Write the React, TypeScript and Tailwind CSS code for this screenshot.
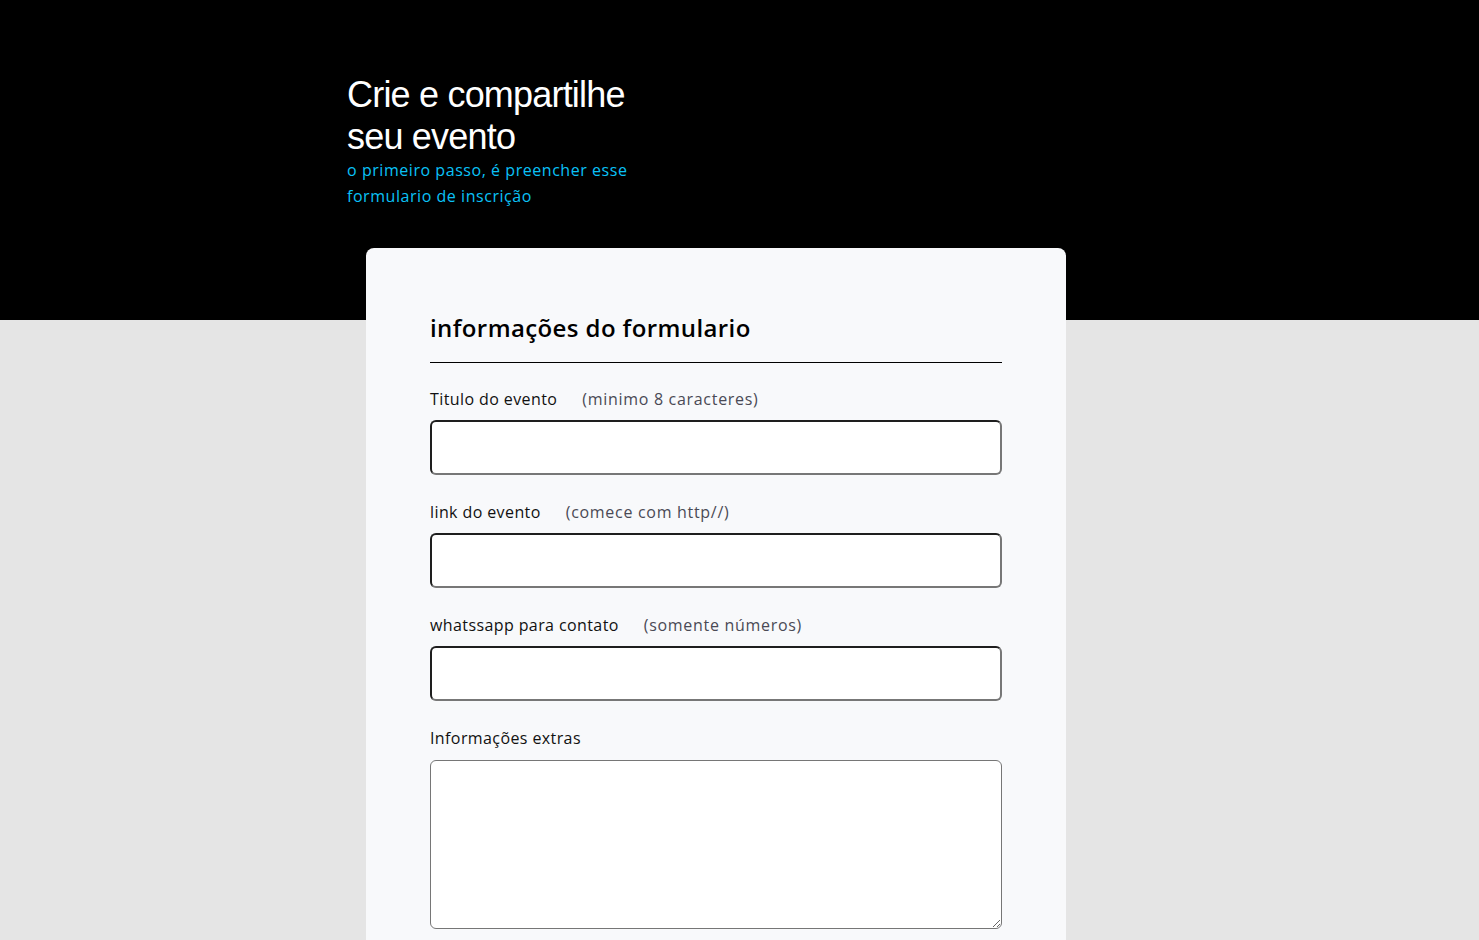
const fieldFont = { fontFamily: '"Open Sans", "Noto Sans", sans-serif' }

interface FieldProps {
  label: string
  hint?: string
}

function Field({ label, hint }: FieldProps) {
  return (
    <div className="flex flex-col">
      <div className="flex items-center gap-[25px] h-[26px] text-[16px] leading-[26px] tracking-[0.4px]">
        <span className="text-[#111]">{label}</span>
        {hint && <span className="text-[#4a4a55] tracking-[0.7px]">{hint}</span>}
      </div>
      <input
        type="text"
        className="mt-[8px] h-[55px] w-full rounded-[6px] border-2 border-t-[#1e1e1e] border-l-[#1e1e1e] border-b-[#777] border-r-[#777] bg-white outline-none"
      />
    </div>
  )
}

export default function App() {
  return (
    <div className="h-[940px] overflow-hidden bg-[#e5e5e5]" style={fieldFont}>
      <header className="h-[320px] bg-black pt-[74px] pl-[347px]">
        <h1 className="font-['Liberation_Sans',Arial,sans-serif] text-[36px] leading-[42px] tracking-[-0.8px] text-white">
          Crie e compartilhe
          <br />
          seu evento
        </h1>
        <p className="-mt-[1px] text-[16px] leading-[26px] tracking-[0.55px] text-[#0ac2f7]">
          o primeiro passo, é preencher esse
          <br />
          formulario de inscrição
        </p>
      </header>
      <main className="relative -mt-[72px] ml-[366px] w-[700px] rounded-t-[8px] bg-[#f8f9fb] px-[64px] pt-[62px] pb-[40px]">
        <h2 className="text-[24px] leading-[36px] font-semibold tracking-[0.4px] text-black">informações do formulario</h2>
        <div className="mt-[16px] h-px bg-black" />
        <div className="mt-[23px] flex flex-col gap-[24px]">
          <Field label="Titulo do evento" hint="(minimo 8 caracteres)" />
          <Field label="link do evento" hint="(comece com http//)" />
          <Field label="whatssapp para contato" hint="(somente números)" />
          <div className="flex flex-col">
            <div className="h-[26px] text-[16px] leading-[26px] tracking-[0.4px] text-[#111]">Informações extras</div>
            <textarea className="mt-[9px] h-[169px] w-full rounded-[6px] border border-[#767676] bg-white outline-none" />
          </div>
        </div>
      </main>
    </div>
  )
}
